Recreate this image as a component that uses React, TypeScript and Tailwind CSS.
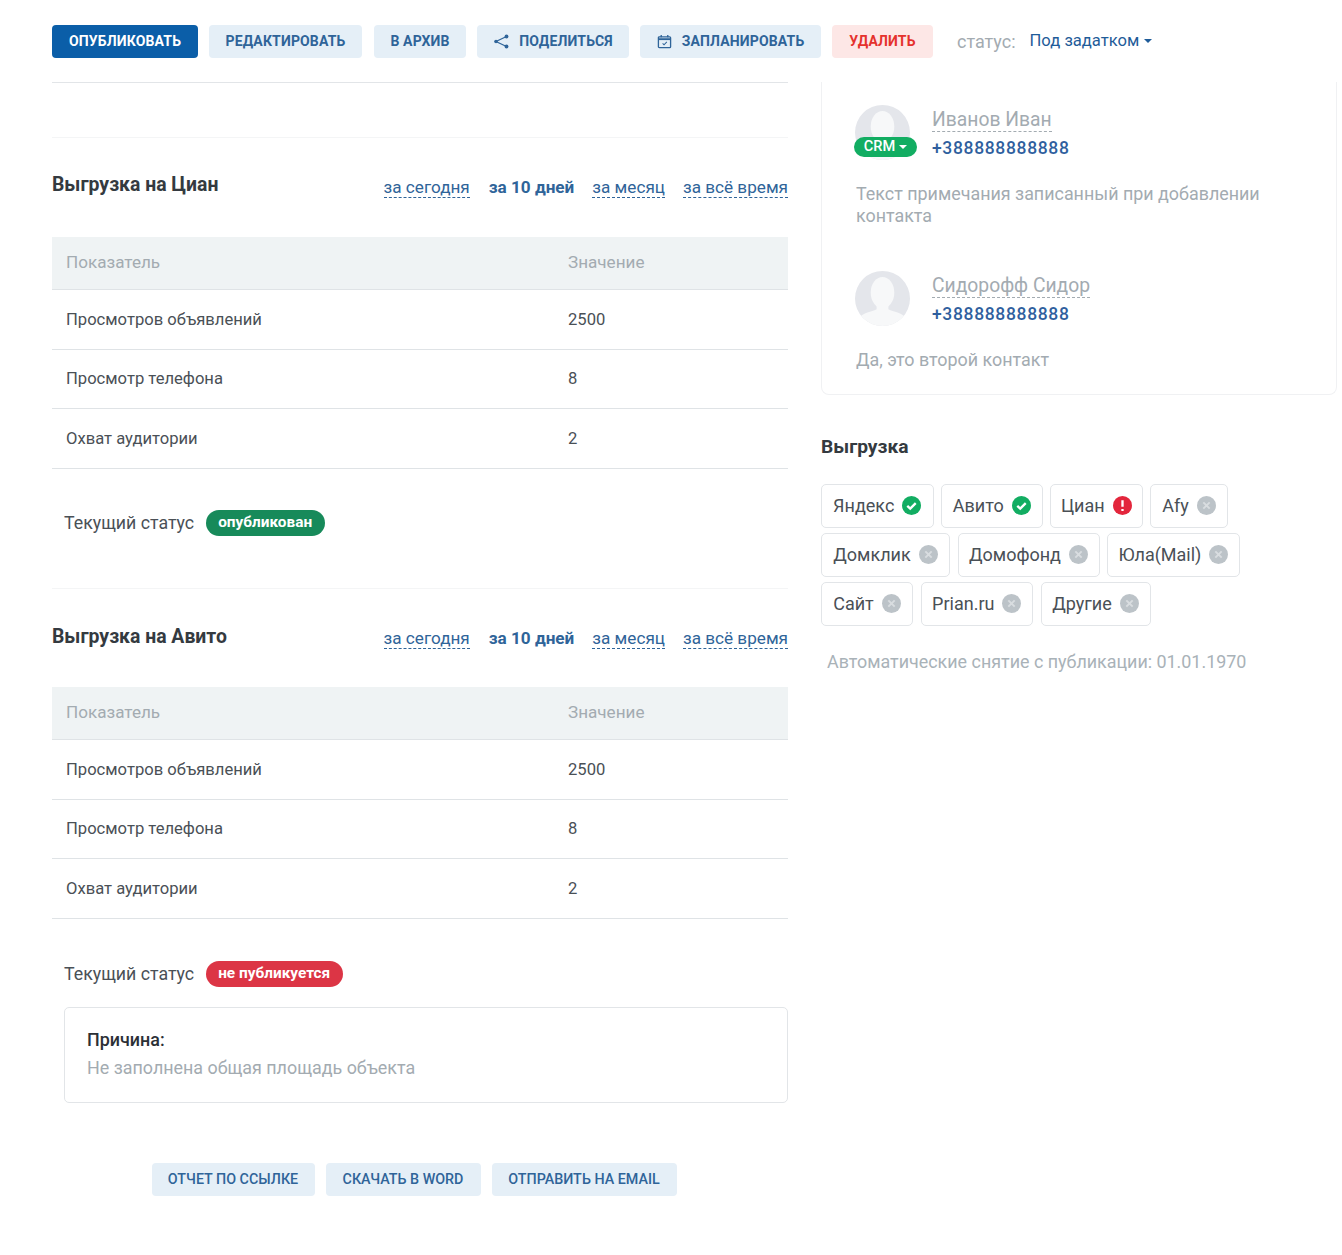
const font = "font-['Roboto',sans-serif]";

function ToolButton({ children, className }: { children: React.ReactNode; className: string }) {
  return (
    <button className={`h-[33px] rounded-[4px] flex items-center justify-center uppercase ${className}`}>
      {children}
    </button>
  );
}

function Caret({ className = "" }: { className?: string }) {
  return <span className={`inline-block w-0 h-0 border-x-[4px] border-x-transparent border-t-[4px] ${className}`} />;
}

function ShareIcon() {
  return (
    <svg width="17" height="15" viewBox="0 0 17 15" fill="#2f6499" stroke="#2f6499" strokeWidth="1.2">
      <path d="M13.5 2.5L3 7.5l10.5 5" fill="none" />
      <circle cx="3" cy="7.5" r="1.8" stroke="none" />
      <circle cx="13.5" cy="2.5" r="1.9" stroke="none" />
      <circle cx="13.5" cy="12.5" r="1.9" stroke="none" />
    </svg>
  );
}

function CalendarIcon() {
  return (
    <svg width="15" height="15" viewBox="0 0 16 16" fill="none" stroke="#2f6499" strokeWidth="1.4">
      <rect x="1.5" y="3" width="13" height="11.5" rx="1" />
      <path d="M1.5 5.5h13" strokeWidth="2" />
      <path d="M4.5 1v2.5M11.5 1v2.5" />
      <path d="M6 10l1.5 1.5L10.5 8.5" strokeWidth="1.1" />
    </svg>
  );
}

function Toolbar() {
  const top = "text-[14px] font-bold tracking-[0.15px]";
  const soft = `${top} bg-[#e5eff7] text-[#2f6499]`;
  return (
    <div className="flex items-center pl-[52px] pt-[25px] h-[82px] pb-[24px]">
      <ToolButton className={`${top} w-[146px] bg-[#0b5ea8] text-white`}>Опубликовать</ToolButton>
      <ToolButton className={`${soft} w-[153px] ml-[11px]`}>Редактировать</ToolButton>
      <ToolButton className={`${soft} w-[92px] ml-[12px]`}>В архив</ToolButton>
      <ToolButton className={`${soft} w-[152px] ml-[11px] gap-[9px]`}>
        <ShareIcon />
        Поделиться
      </ToolButton>
      <ToolButton className={`${soft} w-[181px] ml-[11px] gap-[10px]`}>
        <CalendarIcon />
        Запланировать
      </ToolButton>
      <ToolButton className={`${top} w-[101px] ml-[11px] bg-[#fde7e6] text-[#e5322d]`}>Удалить</ToolButton>
      <span className="ml-[24px] text-[18px] text-[#a3abb1]">статус:</span>
      <span className="ml-[14px] text-[16.6px] text-[#1f5c99] flex items-center gap-[5px]">
        Под задатком
        <Caret className="border-t-[#1f5c99]" />
      </span>
    </div>
  );
}

const rows = [
  ["Просмотров объявлений", "2500"],
  ["Просмотр телефона", "8"],
  ["Охват аудитории", "2"],
];

function StatTable() {
  return (
    <div>
      <div className="grid grid-cols-[502px_1fr] h-[53px] items-center bg-[#eff3f4] border-b border-[#dfe3e6] text-[17.1px] text-[#a3abb1] pl-[14px]">
        <span>Показатель</span>
        <span>Значение</span>
      </div>
      {rows.map(([name, value]) => (
        <div key={name} className="grid grid-cols-[502px_1fr] h-[59.5px] pt-[1.5px] items-center border-b border-[#dfe3e6] text-[16.6px] text-[#4a5056] pl-[14px]">
          <span>{name}</span>
          <span>{value}</span>
        </div>
      ))}
    </div>
  );
}

function Periods({ className }: { className: string }) {
  const link = "text-[#2f6499] border-b border-dashed border-[#2f6499] leading-[20px]";
  return (
    <div className={`flex gap-[18px] text-[17.15px] ${className}`}>
      <span className={`${link} mr-[1px]`}>за сегодня</span>
      <span className="text-[#2f6499] font-bold leading-[20px]">за 10 дней</span>
      <span className={link}>за месяц</span>
      <span className={link}>за всё время</span>
    </div>
  );
}

function Badge({ className, children }: { className: string; children: React.ReactNode }) {
  return (
    <span className={`h-[26px] pl-[12px] pr-[13px] rounded-full text-white text-[15.4px] font-bold flex items-center ${className}`}>
      {children}
    </span>
  );
}

function Section({
  title,
  headClass,
  periodsClass,
  children,
}: {
  title: string;
  headClass: string;
  periodsClass: string;
  children: React.ReactNode;
}) {
  return (
    <section>
      <div className={`flex justify-between items-start ${headClass}`}>
        <h2 className="text-[19.4px] font-bold text-[#343a40] leading-[26px]">{title}</h2>
        <Periods className={periodsClass} />
      </div>
      <StatTable />
      {children}
    </section>
  );
}

function CurrentStatus({ badge }: { badge: React.ReactNode }) {
  return (
    <div className="flex items-center gap-[12px] pl-[12px] text-[17.75px] text-[#4a5056]">
      <span>Текущий статус</span>
      {badge}
    </div>
  );
}

function LeftColumn() {
  return (
    <div className="w-[736px] shrink-0">
      <div className="border-t border-[#e2e5e8] h-[55px]" />
      <div className="border-t border-[#f4f5f6] pt-[34px]">
        <Section title="Выгрузка на Циан" headClass="h-[65px]" periodsClass="mt-[5px]">
          <div className="mt-[41px] mb-[52px]">
            <CurrentStatus badge={<Badge className="bg-[#178a5a]">опубликован</Badge>} />
          </div>
        </Section>
      </div>
      <div className="border-t border-[#f4f5f6] pt-[35px]">
        <Section title="Выгрузка на Авито" headClass="h-[63px]" periodsClass="mt-[4px]">
          <div className="mt-[42px]">
            <CurrentStatus badge={<Badge className="bg-[#dc3545]">не публикуется</Badge>} />
          </div>
          <div className="ml-[12px] mt-[20px] h-[96px] border border-[#e2e5e8] rounded-[5px] pl-[22px] pt-[18px] text-[17.9px] leading-[28px]">
            <div className="font-medium text-[#2b3036]">Причина:</div>
            <div className="text-[#a3abb1]">Не заполнена общая площадь объекта</div>
          </div>
        </Section>
      </div>
      <div className="flex justify-center gap-[11px] mt-[60px] pr-[12px]">
        {[
          ["Отчет по ссылке", "w-[163px]"],
          ["Скачать в Word", "w-[155px]"],
          ["Отправить на email", "w-[185px]"],
        ].map(([label, w]) => (
          <ToolButton key={label} className={`${w} text-[14.3px] font-medium bg-[#e5eff7] text-[#2f6499]`}>
            {label}
          </ToolButton>
        ))}
      </div>
    </div>
  );
}

function Avatar({ crm, id }: { crm?: boolean; id: string }) {
  return (
    <div className="relative w-[55px] h-[56px] shrink-0">
      <svg width="55" height="55" viewBox="0 0 56 56">
        <defs>
          <clipPath id={id}>
            <circle cx="28" cy="28" r="28" />
          </clipPath>
        </defs>
        <g clipPath={`url(#${id})`}>
          <rect width="56" height="56" fill="#e4e6eb" />
          <ellipse cx="28" cy="22" rx="12" ry="16" fill="#f7f8f9" />
          <path d="M22 32h12v7c5 3 14 3 18 9v8H4v-8c4-6 13-6 18-9z" fill="#f7f8f9" />
        </g>
      </svg>
      {crm && (
        <span className="absolute left-[-1px] top-[32px] w-[63px] h-[20px] rounded-full bg-[#12ad62] text-white text-[14.6px] font-medium flex items-center justify-center gap-[4px]">
          CRM
          <Caret className="border-t-white" />
        </span>
      )}
    </div>
  );
}

function Contact({ name, note, crm, id }: { name: string; note: string; crm?: boolean; id: string }) {
  return (
    <div>
      <div className="flex gap-[22px] pl-[33px]">
        <Avatar crm={crm} id={id} />
        <div className="pt-[3px]">
          <div className="inline-block text-[19.3px] leading-[23px] text-[#a3abb1] border-b border-dashed border-[#a3abb1]">{name}</div>
          <div className="text-[17.5px] font-medium text-[#2f5f9e] leading-[30px] tracking-[0.65px]">+388888888888</div>
        </div>
      </div>
      <p className="pl-[34px] mt-[20px] text-[17.9px] leading-[22px] text-[#a3abb1] w-[470px]">{note}</p>
    </div>
  );
}

type ExportState = "ok" | "error" | "off";

function StateIcon({ state }: { state: ExportState }) {
  if (state === "ok") {
    return (
      <svg width="19" height="19" viewBox="0 0 18 18">
        <circle cx="9" cy="9" r="9" fill="#12ad62" />
        <path d="M5 9.3l2.8 2.7L13 6.8" fill="none" stroke="#fff" strokeWidth="2.2" />
      </svg>
    );
  }
  if (state === "error") {
    return (
      <svg width="19" height="19" viewBox="0 0 18 18">
        <circle cx="9" cy="9" r="9" fill="#e3263c" />
        <path d="M9 4v6.2M9 12.2v2" fill="none" stroke="#fff" strokeWidth="2.2" />
      </svg>
    );
  }
  return (
    <svg width="19" height="19" viewBox="0 0 18 18">
      <circle cx="9" cy="9" r="9" fill="#bcc3c8" />
      <path d="M6 6l6 6M12 6l-6 6" fill="none" stroke="#d9dde0" strokeWidth="1.8" />
    </svg>
  );
}

const exportsList: { name: string; state: ExportState; w: string }[] = [
  { name: "Яндекс", state: "ok", w: "w-[112.5px]" },
  { name: "Авито", state: "ok", w: "w-[101.5px]" },
  { name: "Циан", state: "error", w: "w-[92.5px]" },
  { name: "Afy", state: "off", w: "w-[78px]" },
  { name: "Домклик", state: "off", w: "w-[129px]" },
  { name: "Домофонд", state: "off", w: "w-[142px]" },
  { name: "Юла(Mail)", state: "off", w: "w-[133px]" },
  { name: "Сайт", state: "off", w: "w-[92px]" },
  { name: "Prian.ru", state: "off", w: "w-[112.5px]" },
  { name: "Другие", state: "off", w: "w-[110px]" },
];

function RightColumn() {
  return (
    <div className="w-[516px] shrink-0">
      <div className="h-[313px] border-x border-b border-[#f0f1f3] rounded-b-[8px] pt-[23px]">
        <Contact id="avatar-a" name="Иванов Иван" note="Текст примечания записанный при добавлении контакта" crm />
        <div className="mt-[44px]">
          <Contact id="avatar-b" name="Сидорофф Сидор" note="Да, это второй контакт" />
        </div>
      </div>
      <h3 className="mt-[40px] text-[19.2px] font-bold text-[#343a40] leading-[24px]">Выгрузка</h3>
      <div className="mt-[25px] flex flex-wrap gap-x-[7.5px] gap-y-[5px] w-[430px]">
        {exportsList.map((item) => (
          <div key={item.name} className={`${item.w} h-[44px] pb-[2px] border border-[#e2e5e8] rounded-[5px] flex items-center justify-center gap-[8px] text-[18px] text-[#4a5056]`}>
            {item.name}
            <StateIcon state={item.state} />
          </div>
        ))}
      </div>
      <p className="mt-[24px] ml-[6px] text-[17.9px] leading-[24px] text-[#a9b2b8]">
        Автоматические снятие с публикации: 01.01.1970
      </p>
    </div>
  );
}

export default function App() {
  return (
    <div className={`${font} w-[1342px] h-[1255px] bg-white overflow-hidden`}>
      <Toolbar />
      <div className="flex gap-[33px] pl-[52px]">
        <LeftColumn />
        <RightColumn />
      </div>
    </div>
  );
}
